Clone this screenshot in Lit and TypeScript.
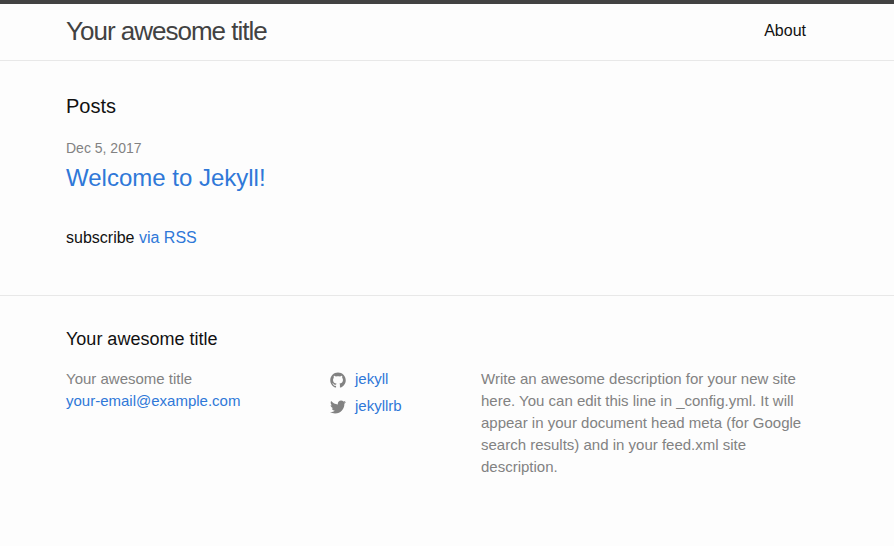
import { LitElement, html, css } from "lit";
import { customElement } from "lit/decorators.js";

const GH = "M7.999,0.431c-4.285,0-7.76,3.474-7.76,7.761c0,3.428,2.223,6.337,5.307,7.363c0.388,0.071,0.53-0.168,0.53-0.374c0-0.184-0.007-0.672-0.01-1.32c-2.159,0.469-2.614-1.04-2.614-1.04c-0.353-0.896-0.862-1.135-0.862-1.135c-0.705-0.481,0.053-0.472,0.053-0.472c0.779,0.055,1.189,0.8,1.189,0.8c0.692,1.186,1.816,0.843,2.258,0.645c0.071-0.502,0.271-0.843,0.493-1.037C4.86,11.425,3.049,10.76,3.049,7.786c0-0.847,0.302-1.54,0.799-2.082C3.768,5.507,3.501,4.718,3.924,3.65c0,0,0.652-0.209,2.134,0.796C6.677,4.273,7.34,4.187,8,4.184c0.659,0.003,1.323,0.089,1.943,0.261c1.482-1.004,2.132-0.796,2.132-0.796c0.423,1.068,0.157,1.857,0.077,2.054c0.497,0.542,0.798,1.235,0.798,2.082c0,2.981-1.814,3.637-3.543,3.829c0.279,0.24,0.527,0.713,0.527,1.437c0,1.037-0.01,1.874-0.01,2.129c0,0.208,0.14,0.449,0.534,0.373c3.081-1.028,5.302-3.935,5.302-7.362C15.76,3.906,12.285,0.431,7.999,0.431z";
const TW = "M15.969,3.058c-0.586,0.26-1.217,0.436-1.878,0.515c0.675-0.405,1.194-1.045,1.438-1.809c-0.632,0.375-1.332,0.647-2.076,0.793c-0.596-0.636-1.446-1.033-2.387-1.033c-1.806,0-3.27,1.464-3.27,3.27c0,0.256,0.029,0.506,0.085,0.745C5.163,5.404,2.753,4.102,1.14,2.124C0.859,2.607,0.698,3.168,0.698,3.767c0,1.134,0.577,2.135,1.455,2.722C1.616,6.472,1.112,6.325,0.671,6.08c0,0.014,0,0.027,0,0.041c0,1.584,1.127,2.906,2.623,3.206C3.02,9.402,2.731,9.442,2.433,9.442c-0.211,0-0.416-0.021-0.615-0.059c0.416,1.299,1.624,2.245,3.055,2.271c-1.119,0.877-2.529,1.4-4.061,1.4c-0.264,0-0.524-0.015-0.78-0.046c1.447,0.928,3.166,1.469,5.013,1.469c6.015,0,9.304-4.983,9.304-9.304c0-0.142-0.003-0.283-0.009-0.423C14.976,4.29,15.531,3.714,15.969,3.058z";

@customElement("app-root")
export class AppRoot extends LitElement {
  static styles = css`
    :host { display: block; height: 546px; overflow: hidden; background: #fdfdfd; color: #111; font: 16px/24px "Liberation Sans", Arial, sans-serif; }
    a { color: #2f78d8; text-decoration: none; }
    .wrap { width: 740px; margin-left: 66px; }
    header { border-top: 4px solid #424242; border-bottom: 1px solid #e8e8e8; }
    header .wrap { display: flex; justify-content: space-between; height: 56px; line-height: 54px; }
    .brand { font-size: 26px; letter-spacing: -1px; color: #424242; }
    .nav { color: #111; }
    main { padding: 30px 0 45px; }
    .heading { margin: 0 0 16px; font-size: 20px; line-height: 30px; font-weight: 400; }
    .meta { font-size: 14px; line-height: 22px; margin-bottom: 1px; color: #828282; }
    .post { display: block; font-size: 24px; line-height: 36px; }
    .rss { margin: 30px 0 0; }
    footer { border-top: 1px solid #e8e8e8; padding: 30px 0; }
    .ftitle { margin: 0 0 15px; font-size: 18px; line-height: 27px; font-weight: 400; }
    .cols { display: flex; font-size: 15px; line-height: 22px; color: #828282; }
    .c1 { width: 264px; }
    .c2 { width: 151px; }
    .c3 { width: 325px; }
    .social { display: flex; flex-direction: column; gap: 5px; }
    .social a { display: flex; align-items: center; gap: 9px; }
    svg { width: 16px; height: 16px; margin-top: 2px; fill: #828282; display: block; }
  `;

  render() {
    return html`
      <header>
        <div class="wrap">
          <span class="brand">Your awesome title</span>
          <a class="nav">About</a>
        </div>
      </header>
      <main>
        <div class="wrap">
          <h1 class="heading">Posts</h1>
          <div class="meta">Dec 5, 2017</div>
          <a class="post">Welcome to Jekyll!</a>
          <p class="rss">subscribe <a>via RSS</a></p>
        </div>
      </main>
      <footer>
        <div class="wrap">
          <h2 class="ftitle">Your awesome title</h2>
          <div class="cols">
            <div class="c1"><div>Your awesome title</div><a>your-email@example.com</a></div>
            <div class="c2 social">
              <a><svg viewBox="0 0 16 16"><path d=${GH}></path></svg>jekyll</a>
              <a><svg viewBox="0 0 16 16"><path d=${TW}></path></svg>jekyllrb</a>
            </div>
            <div class="c3">Write an awesome description for your new site here. You can edit this line in _config.yml. It will appear in your document head meta (for Google search results) and in your feed.xml site description.</div>
          </div>
        </div>
      </footer>
    `;
  }
}
